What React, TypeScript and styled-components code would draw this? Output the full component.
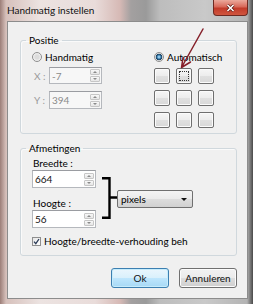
import React from "react";
import styled, { createGlobalStyle } from "styled-components";

const GlobalStyle = createGlobalStyle`
  html, body {
    margin: 0;
    padding: 0;
    background: #ffffff;
  }
  body {
    font-family: Lato, "Noto Sans", sans-serif;
    font-size: 10px;
    color: #000;
  }
`;

const Window = styled.div`
  position: relative;
  width: 253px;
  height: 304px;
  box-sizing: border-box;
  display: flex;
  flex-direction: column;
  padding: 0 5px 5px 7px;
  background: linear-gradient(
    90deg,
    #9c7e78 0px,
    #d6c0bb 6px,
    #ece3e1 40px,
    #e9dcda 95px,
    #d6b9b5 120px,
    #a3a0a0 131px,
    #9a9a9a 146px,
    #bdbdbd 160px,
    #c9c9c9 205px,
    #b4b4b4 247px,
    #4a4a4a 253px
  );
`;

const TitleBar = styled.div`
  height: 21px;
  display: flex;
  align-items: flex-start;
`;

const Title = styled.div`
  padding-top: 4px;
  font-size: 10px;
  line-height: 12px;
  color: #111;
`;

const CloseButton = styled.div`
  margin-left: auto;
  width: 35px;
  height: 16px;
  box-sizing: border-box;
  border: 1px solid #6e2a22;
  border-top: none;
  border-radius: 0 0 4px 4px;
  background: linear-gradient(#eba99c, #d8695a 45%, #c23b2a 55%, #d0563f);
  display: flex;
  align-items: center;
  justify-content: center;
`;

const Client = styled.div`
  flex: 1;
  box-sizing: border-box;
  border: 1px solid #8c8c8c;
  background: #f0f0f0;
  padding: 12px 10px 0 12px;
  display: flex;
  flex-direction: column;
`;

const Group = styled.fieldset<{ $gap?: number }>`
  margin: ${(p) => p.$gap ?? 0}px 0 0 0;
  padding: 0;
  min-width: 0;
  border: 1px solid #d0d8dd;
  border-radius: 3px;
  box-shadow: inset 1px 1px 0 #fafafa;
`;

const Legend = styled.legend`
  margin-left: 5px;
  padding: 0 3px;
  font-size: 10px;
  line-height: 12px;
`;

const PositionBody = styled.div`
  display: grid;
  grid-template-columns: 122px 1fr;
  padding: 4px 0 5px 11px;
`;

const Column = styled.div`
  display: flex;
  flex-direction: column;
`;

const OptionRow = styled.label`
  height: 14px;
  display: flex;
  align-items: center;
  gap: 3px;
  line-height: 14px;
`;

const Radio = styled.span<{ $checked?: boolean }>`
  width: 10px;
  height: 10px;
  box-sizing: border-box;
  border-radius: 50%;
  border: 1px solid #8f8f8f;
  background: ${(p) =>
    p.$checked
      ? "radial-gradient(circle, #8fc7ea 0 1px, #2b6f9f 2px, #1c3f5c 3px, #e4e4e4 3.6px, #f6f6f6)"
      : "radial-gradient(circle, #dcdcdc 0 2px, #f4f4f4 4px)"};
`;

const FieldRow = styled.div<{ $top: number }>`
  display: flex;
  align-items: center;
  margin-top: ${(p) => p.$top}px;
`;

const AxisLabel = styled.span`
  width: 15px;
  padding-left: 2px;
  color: #9a9a9a;
`;

const SpinBox = styled.div<{ $width: number; $height: number; $disabled?: boolean }>`
  width: ${(p) => p.$width}px;
  height: ${(p) => p.$height}px;
  box-sizing: border-box;
  border: 1px solid #b5b8bd;
  border-top-color: #9a9ca1;
  background: ${(p) => (p.$disabled ? "#f7f7f7" : "#ffffff")};
  color: ${(p) => (p.$disabled ? "#8a8a8a" : "#111")};
  display: flex;
  align-items: center;
  padding: 0 1px 0 2px;
`;

const SpinText = styled.span`
  flex: 1;
  line-height: 12px;
`;

const Spinner = styled.div`
  width: 10px;
  height: 100%;
  display: flex;
  flex-direction: column;
  justify-content: center;
  gap: 1px;
`;

const SpinButton = styled.div`
  height: 6px;
  box-sizing: border-box;
  border: 1px solid #c6c6c6;
  border-radius: 1px;
  background: linear-gradient(#f8f8f8, #e6e6e6);
  display: flex;
  align-items: center;
  justify-content: center;
`;

const Arrow = styled.span<{ $up?: boolean }>`
  width: 0;
  height: 0;
  border-left: 2px solid transparent;
  border-right: 2px solid transparent;
  ${(p) => (p.$up ? "border-bottom: 2px solid #8a8a8a;" : "border-top: 2px solid #8a8a8a;")}
`;

const AnchorGrid = styled.div`
  margin-top: 4px;
  display: grid;
  grid-template-columns: repeat(3, 16px);
  grid-auto-rows: 16px;
  gap: 6px;
`;

const AnchorCell = styled.div<{ $focused?: boolean }>`
  box-sizing: border-box;
  border: 1px solid #6f6f6f;
  border-radius: 2px;
  background: linear-gradient(#f6f6f6, #ececec 50%, #e0e0e0 51%, #d8d8d8);
  box-shadow: inset 0 0 0 1px #fbfbfb;
  padding: 2px;
  &::after {
    content: "";
    display: ${(p) => (p.$focused ? "block" : "none")};
    height: 100%;
    box-sizing: border-box;
    border: 1px dotted #333;
  }
`;

const SizeBody = styled.div`
  padding: 3px 0 8px 11px;
  display: flex;
  flex-direction: column;
`;

const SizeRow = styled.div`
  display: flex;
  align-items: flex-start;
`;

const FieldLabel = styled.div<{ $top?: number }>`
  line-height: 12px;
  padding-left: 1px;
  margin-top: ${(p) => p.$top ?? 0}px;
`;

const Bracket = styled.svg`
  margin: 20px 0 0 6px;
  flex: none;
`;

const Select = styled.div`
  margin-top: 33px;
  width: 76px;
  height: 18px;
  box-sizing: border-box;
  border: 1px solid #707070;
  border-radius: 2px;
  background: linear-gradient(#f4f4f4, #ebebeb 50%, #dddddd 51%, #d1d1d1);
  display: flex;
  align-items: center;
  padding: 0 5px 0 3px;
`;

const SelectText = styled.span`
  flex: 1;
`;

const SelectArrow = styled.span`
  width: 0;
  height: 0;
  border-left: 3px solid transparent;
  border-right: 3px solid transparent;
  border-top: 3px solid #111;
`;

const CheckRow = styled.label`
  margin-top: 7px;
  height: 12px;
  display: flex;
  align-items: center;
  gap: 3px;
`;

const CheckBox = styled.span`
  width: 9px;
  height: 9px;
  flex: none;
  box-sizing: border-box;
  border: 1px solid #8f8f8f;
  background: linear-gradient(135deg, #e6e6e6, #ffffff);
  display: flex;
  align-items: center;
  justify-content: center;
`;

const CheckText = styled.span`
  width: 144px;
  white-space: nowrap;
  overflow: hidden;
  line-height: 12px;
`;

const ButtonRow = styled.div`
  margin-top: 12px;
  display: flex;
  justify-content: flex-end;
  gap: 10px;
`;

const DialogButton = styled.button<{ $default?: boolean }>`
  width: 58px;
  height: 20px;
  padding: 0;
  font-family: inherit;
  font-size: 10px;
  color: #111;
  border-radius: 3px;
  border: 1px solid ${(p) => (p.$default ? "#3c7fb1" : "#707070")};
  background: ${(p) =>
    p.$default
      ? "linear-gradient(#eaf6fd, #d9f0fc 50%, #bee6fd 51%, #a7d9f5)"
      : "linear-gradient(#f2f2f2, #ebebeb 50%, #dddddd 51%, #cfcfcf)"};
  box-shadow: inset 0 0 0 1px ${(p) => (p.$default ? "#c6ecfc" : "#fcfcfc")};
`;

const Annotation = styled.svg`
  position: absolute;
  left: 0;
  top: 0;
  pointer-events: none;
`;

const NumberField = ({
  value,
  width,
  height,
  disabled,
}: {
  value: string;
  width: number;
  height: number;
  disabled?: boolean;
}) => (
  <SpinBox $width={width} $height={height} $disabled={disabled}>
    <SpinText>{value}</SpinText>
    <Spinner>
      <SpinButton>
        <Arrow $up />
      </SpinButton>
      <SpinButton>
        <Arrow />
      </SpinButton>
    </Spinner>
  </SpinBox>
);

const App = () => {
  const cells = [0, 1, 2, 3, 4, 5, 6, 7, 8];

  return (
    <>
      <GlobalStyle />
      <Window>
        <TitleBar>
          <Title>Handmatig instellen</Title>
          <CloseButton>
            <svg width="9" height="8" viewBox="0 0 9 8">
              <path d="M1.5 1 L7.5 7 M7.5 1 L1.5 7" stroke="#5a1a14" strokeWidth="3" />
              <path d="M1.5 1 L7.5 7 M7.5 1 L1.5 7" stroke="#ffffff" strokeWidth="1.6" />
            </svg>
          </CloseButton>
        </TitleBar>
        <Client>
          <Group>
            <Legend>Positie</Legend>
            <PositionBody>
              <Column>
                <OptionRow>
                  <Radio />
                  Handmatig
                </OptionRow>
                <FieldRow $top={3}>
                  <AxisLabel>X :</AxisLabel>
                  <NumberField value="-7" width={53} height={17} disabled />
                </FieldRow>
                <FieldRow $top={7}>
                  <AxisLabel>Y :</AxisLabel>
                  <NumberField value="394" width={53} height={18} disabled />
                </FieldRow>
              </Column>
              <Column>
                <OptionRow>
                  <Radio $checked />
                  Automatisch
                </OptionRow>
                <AnchorGrid>
                  {cells.map((i) => (
                    <AnchorCell key={i} $focused={i === 1} />
                  ))}
                </AnchorGrid>
              </Column>
            </PositionBody>
          </Group>

          <Group $gap={8}>
            <Legend>Afmetingen</Legend>
            <SizeBody>
              <SizeRow>
                <Column>
                  <FieldLabel>Breedte :</FieldLabel>
                  <FieldRow $top={1}>
                    <NumberField value="664" width={64} height={18} />
                  </FieldRow>
                  <FieldLabel $top={9}>Hoogte :</FieldLabel>
                  <FieldRow $top={1}>
                    <NumberField value="56" width={64} height={18} />
                  </FieldRow>
                </Column>
                <Bracket width="15" height="42" viewBox="0 0 15 42">
                  <path
                    d="M0 1.2 H7.5 V40.8 H0 M7.5 20.5 H15"
                    fill="none"
                    stroke="#000"
                    strokeWidth="2.4"
                  />
                </Bracket>
                <Select>
                  <SelectText>pixels</SelectText>
                  <SelectArrow />
                </Select>
              </SizeRow>
              <CheckRow>
                <CheckBox>
                  <svg width="7" height="7" viewBox="0 0 7 7">
                    <path d="M1 3.6 L2.8 5.6 L6 1" fill="none" stroke="#2a3a56" strokeWidth="1.3" />
                  </svg>
                </CheckBox>
                <CheckText>Hoogte/breedte-verhouding behouden</CheckText>
              </CheckRow>
            </SizeBody>
          </Group>

          <ButtonRow>
            <DialogButton $default>Ok</DialogButton>
            <DialogButton>Annuleren</DialogButton>
          </ButtonRow>
        </Client>

        <Annotation width="253" height="304" viewBox="0 0 253 304">
          <path
            d="M203 29 L181.5 67.5 M181.5 67.5 L183 57.5 M181.5 67.5 L190.5 62"
            fill="none"
            stroke="#86202a"
            strokeWidth="1.5"
            strokeLinecap="round"
          />
        </Annotation>
      </Window>
    </>
  );
};

export default App;
